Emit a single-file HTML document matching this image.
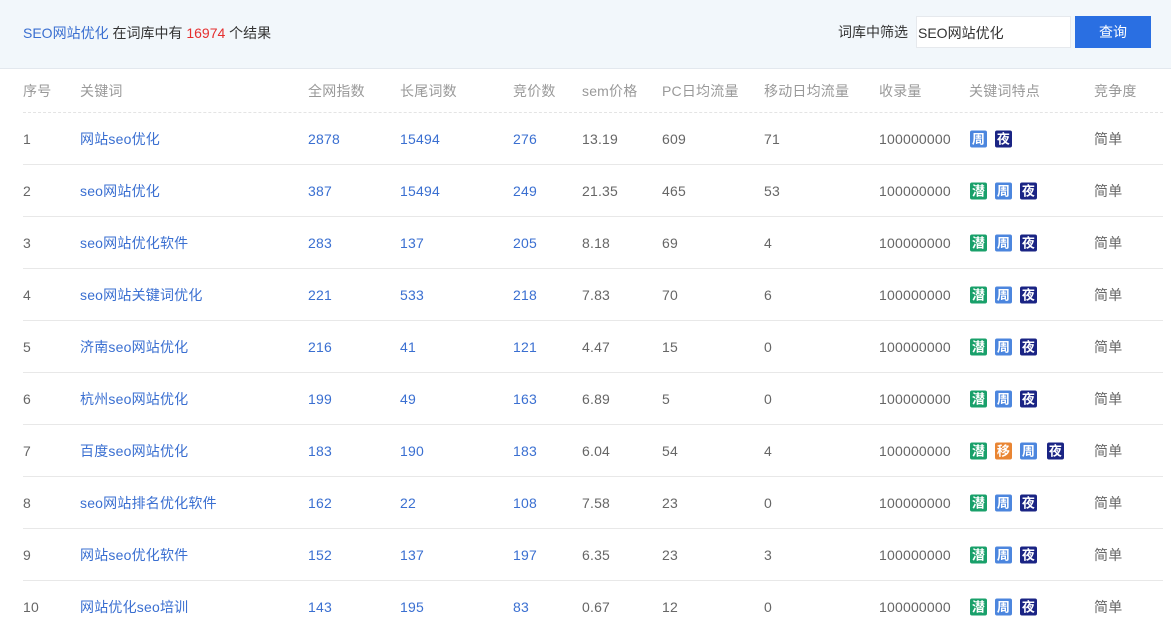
<!DOCTYPE html><html><head><meta charset="utf-8"><style>
*{margin:0;padding:0;box-sizing:border-box}
body{width:1171px;height:628px;overflow:hidden;background:#fff;font-family:"Liberation Sans","Noto Sans CJK SC",sans-serif;font-size:14px;color:#666}
.top{height:69px;background:#f2f7fb;border-bottom:1px solid #e3e8ee;position:relative}
.t1{position:absolute;left:23px;top:23px;color:#333}
.b{color:#3a6fd1}.r{color:#e52f2f}
.lab{position:absolute;left:838px;top:22px;color:#333}
.inp{position:absolute;left:916px;top:16px;width:155px;height:32px;background:#fff;border:1px solid #e6e9ed;padding:6px 0 0 1px;color:#333}
.btn{position:absolute;left:1075px;top:16px;width:76px;height:32px;background:#2a6fe2;color:#fff;text-align:center;line-height:32px}
.row{position:absolute;left:23px;width:1140px;height:52px}
.row span{position:absolute;top:50%;transform:translateY(-50%);white-space:nowrap;letter-spacing:0.2px}
.hd{top:69px;height:44px;border-bottom:1px dashed #e4e4e4;color:#999}
.hd span{top:22px}
.dr{border-bottom:1px solid #e8e8e8}
.bd{display:inline-block;vertical-align:middle;width:17px;height:17px;font-size:13px;line-height:17px;text-align:center;color:#fff;border-radius:2px;font-weight:bold;margin-right:8px;font-style:normal}
.q{background:#19a06a}.z{background:#4c86de}.y{background:#1a2484}.m{background:#e98533}
</style></head><body>
<div class="top"><div class="t1"><span class="b">SEO网站优化</span> 在词库中有 <span class="r">16974</span> 个结果</div>
<div class="lab">词库中筛选</div><div class="inp">SEO网站优化</div><div class="btn">查询</div></div>
<div class="row hd"><span style="left:0">序号</span><span style="left:57px">关键词</span><span style="left:285px">全网指数</span><span style="left:377px">长尾词数</span><span style="left:490px">竞价数</span><span style="left:559px">sem价格</span><span style="left:639px">PC日均流量</span><span style="left:741px">移动日均流量</span><span style="left:856px">收录量</span><span style="left:946px">关键词特点</span><span style="left:1071px">竞争度</span></div>
<div id="rows"></div>
<script>
var d=[[1,"网站seo优化",2878,15494,276,"13.19",609,71,"zy"],[2,"seo网站优化",387,15494,249,"21.35",465,53,"qzy"],[3,"seo网站优化软件",283,137,205,"8.18",69,4,"qzy"],[4,"seo网站关键词优化",221,533,218,"7.83",70,6,"qzy"],[5,"济南seo网站优化",216,41,121,"4.47",15,0,"qzy"],[6,"杭州seo网站优化",199,49,163,"6.89",5,0,"qzy"],[7,"百度seo网站优化",183,190,183,"6.04",54,4,"qmzy"],[8,"seo网站排名优化软件",162,22,108,"7.58",23,0,"qzy"],[9,"网站seo优化软件",152,137,197,"6.35",23,3,"qzy"],[10,"网站优化seo培训",143,195,83,"0.67",12,0,"qzy"]];
var t={q:"潜",z:"周",y:"夜",m:"移"},h="";
d.forEach(function(r,i){var b="";r[8].split("").forEach(function(c,j){b+='<i class="bd '+c+'"'+(r[8].length==4&&j==2?' style="margin-right:10px"':'')+'>'+t[c]+'</i>'});
h+='<div class="row'+(i<9?' dr':'')+'" style="top:'+(113+i*52)+'px"><span style="left:0">'+r[0]+'</span><span class="b" style="left:57px">'+r[1]+'</span><span class="b" style="left:285px">'+r[2]+'</span><span class="b" style="left:377px">'+r[3]+'</span><span class="b" style="left:490px">'+r[4]+'</span><span style="left:559px">'+r[5]+'</span><span style="left:639px">'+r[6]+'</span><span style="left:741px">'+r[7]+'</span><span style="left:856px">100000000</span><span style="left:947px;line-height:0;font-size:0">'+b+'</span><span style="left:1071px">简单</span></div>'});
document.getElementById("rows").innerHTML=h;
</script></body></html>
